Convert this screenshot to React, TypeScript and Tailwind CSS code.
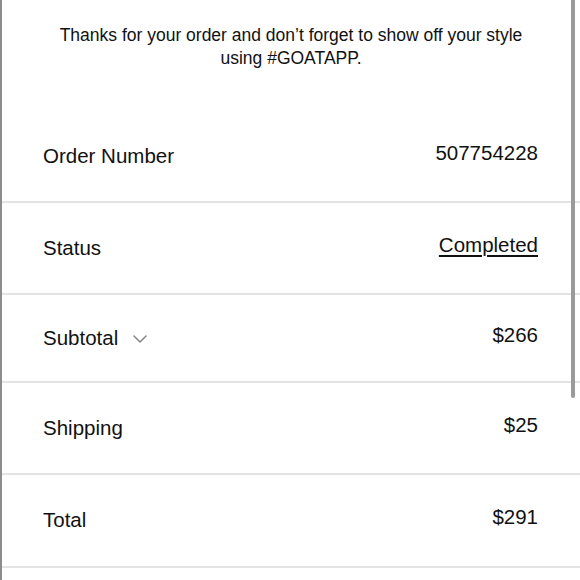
import React from 'react';

type Row = { label: string; value: string; chevron?: boolean; underline?: boolean; h: string };

const rows: Row[] = [
  { label: 'Order Number', value: '507754228', h: 'h-[92px]' },
  { label: 'Status', value: 'Completed', underline: true, h: 'h-[92px]' },
  { label: 'Subtotal', value: '$266', chevron: true, h: 'h-[88px]' },
  { label: 'Shipping', value: '$25', h: 'h-[92px]' },
  { label: 'Total', value: '$291', h: 'h-[93px]' },
];

function Chevron() {
  return (
    <svg width="14" height="8" viewBox="0 0 14 8" fill="none" className="ml-[15px] mt-[2px]">
      <path d="M1 1l6 6 6-6" stroke="#8a8a8a" strokeWidth="1.6" strokeLinecap="round" strokeLinejoin="round" />
    </svg>
  );
}

export default function App() {
  return (
    <div
      className="relative w-[580px] h-[580px] overflow-hidden bg-white border-l-2 border-[#8c8c8c] text-[#111111]"
      style={{ fontFamily: '"Liberation Sans", Arial, sans-serif' }}
    >
      {/* scrollbar thumb */}
      <div className="absolute right-[5px] top-0 w-[4px] h-[398px] bg-[#9a9a9a] rounded-b-sm" />

      <p className="pt-[24px] px-[36px] h-[111px] text-center text-[17.5px] leading-[23px]">
        Thanks for your order and don’t forget to show off your style
        <br />
        using #GOATAPP.
      </p>

      {rows.map((r) => (
        <div
          key={r.label}
          className={`${r.h} flex items-center justify-between pl-[41px] pr-[42px] border-b-2 border-[#e3e3e3]`}
        >
          <div className="flex items-center text-[20.5px]">
            <span>{r.label}</span>
            {r.chevron && <Chevron />}
          </div>
          <span className={`text-[20.5px] mb-[6px] ${r.underline ? 'underline underline-offset-[3px] decoration-[1.5px]' : ''}`}>
            {r.value}
          </span>
        </div>
      ))}
    </div>
  );
}
